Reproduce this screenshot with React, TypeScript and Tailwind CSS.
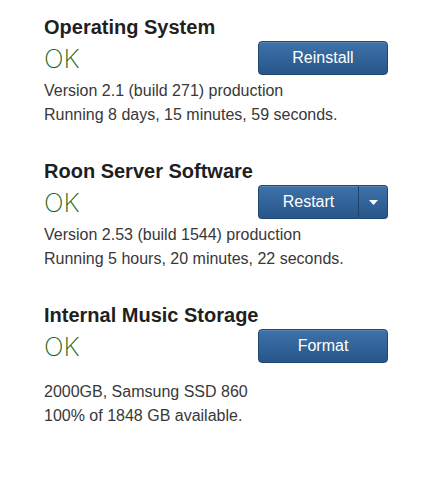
import React from 'react';

const btn =
    'h-[34px] bg-gradient-to-b from-[#3d72aa] to-[#285688] border border-[#1f4774] text-white text-[16px] leading-none shadow-[inset_0_1px_0_rgba(255,255,255,0.15)]';

interface SectionProps {
    title: string;
    action: React.ReactNode;
    lines: string[];
    spaced?: boolean;
}

const Section: React.FC<SectionProps> = ({ title, action, lines, spaced }) => (
    <div>
        <h2 className="text-[20px] leading-[24px] font-bold text-[#1f1f1f]">{title}</h2>
        <div className="mt-[2px] flex items-start">
            <div className="mt-[4px] text-[26px] leading-[28px] font-[250] text-[#1d6a1d] font-['Inter','Liberation_Sans',sans-serif]">OK</div>
            <div className="ml-auto w-[130px]">{action}</div>
        </div>
        <div className={`${spaced ? 'mt-[17px]' : 'mt-[4px]'} text-[16px] leading-[24px] text-[#383838]`}>
            {lines.map((l) => (
                <div key={l}>{l}</div>
            ))}
        </div>
    </div>
);

export default function App() {
    return (
        <div className="w-[441px] h-[500px] bg-white font-['Liberation_Sans',Arial,sans-serif]">
            <div className="pt-[15px] pl-[44px] w-[388px] flex flex-col gap-[32px]">
                <Section
                    title="Operating System"
                    action={<button className={`${btn} w-full rounded-[4px]`}>Reinstall</button>}
                    lines={['Version 2.1 (build 271) production', 'Running 8 days, 15 minutes, 59 seconds.']}
                />
                <Section
                    title="Roon Server Software"
                    action={
                        <div className="flex">
                            <button className={`${btn} flex-1 rounded-l-[4px] border-r-0`}>Restart</button>
                            <button className={`${btn} w-[30px] rounded-r-[4px] border-l border-l-[#1d4370] flex items-center justify-center`}>
                                <svg width="9" height="5" viewBox="0 0 9 5">
                                    <path d="M0 0 H9 L4.5 5 Z" fill="#fff" />
                                </svg>
                            </button>
                        </div>
                    }
                    lines={['Version 2.53 (build 1544) production', 'Running 5 hours, 20 minutes, 22 seconds.']}
                />
                <Section
                    title="Internal Music Storage"
                    action={<button className={`${btn} w-full rounded-[4px]`}>Format</button>}
                    lines={['2000GB, Samsung SSD 860', '100% of 1848 GB available.']}
                    spaced
                />
            </div>
        </div>
    );
}
